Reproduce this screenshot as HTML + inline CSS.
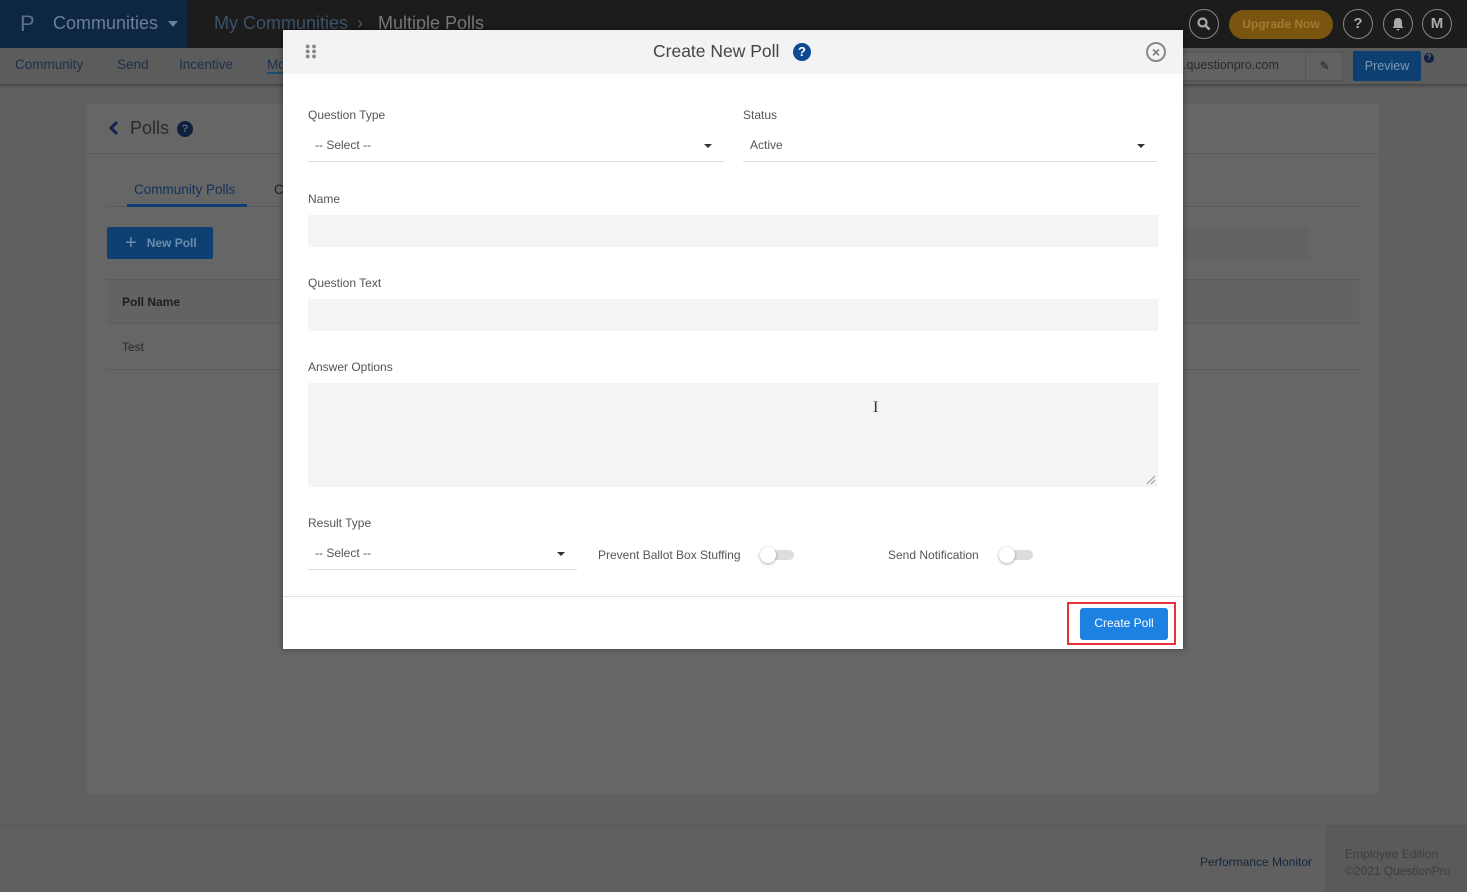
<!DOCTYPE html>
<html><head><meta charset="utf-8"><style>
*{box-sizing:border-box;margin:0;padding:0}
body{width:1467px;height:892px;overflow:hidden;background:#606060;font-family:"Liberation Sans",sans-serif;position:relative;color:#333}
.abs{position:absolute}
.top{left:0;top:0;width:1467px;height:48px;background:#1c1c1c}
.logo{left:0;top:0;width:187px;height:48px;background:#0d2743}
.nav{left:0;top:48px;width:1467px;height:36px;background:#5c5c5c;box-shadow:0 2px 3px rgba(0,0,0,.3)}
.card{left:87px;top:104px;width:1292px;height:690px;background:#666}
.foot{left:0;top:825px;width:1467px;height:67px;background:#606060;border-top:1px solid #575757}
.circ{width:30px;height:30px;border:1.5px solid #888;border-radius:50%;color:#aaa;font-weight:bold;font-size:15px;text-align:center;line-height:27px}
.modal{left:283px;top:30px;width:900px;height:619px;background:#fff;box-shadow:0 0 6px rgba(0,0,0,.4)}
.mh{left:0;top:0;width:900px;height:44px;background:#f3f3f3}
.lbl{font-size:12px;color:#555}
.sel{border-bottom:1px solid #ddd;font-size:12px;color:#555;padding-left:7px;height:32px;line-height:30px}
.car{position:absolute;right:12px;top:14px;border-left:4px solid transparent;border-right:4px solid transparent;border-top:4px solid #333}
.inp{background:#f4f4f4;height:32px}
.tog{width:32px;height:10px;border-radius:5px;background:#ddd}
.tog:before{content:"";position:absolute;left:-2px;top:-3px;width:16px;height:16px;border-radius:50%;background:#fff;box-shadow:0 1px 3px rgba(0,0,0,.35)}
</style></head><body>
<div class="abs top"></div>
<div class="abs logo"></div>
<div class="abs" style="left:20px;top:11px;font-size:22px;color:#5a6f88">P</div>
<div class="abs" style="left:53px;top:13px;font-size:18px;color:#6a7f98">Communities</div>
<div class="abs" style="left:168px;top:21px;border-left:5px solid transparent;border-right:5px solid transparent;border-top:6px solid #6a7f98"></div>
<div class="abs" style="left:214px;top:13px;font-size:18px;color:#3d5269">My Communities</div>
<div class="abs" style="left:357px;top:13px;font-size:18px;color:#555">›</div>
<div class="abs" style="left:378px;top:13px;font-size:18px;color:#777">Multiple Polls</div>
<div class="abs circ" style="left:1189px;top:9px"><svg width="16" height="16" viewBox="0 0 16 16" style="margin-top:6px"><circle cx="6.5" cy="6.5" r="4" fill="none" stroke="#aaa" stroke-width="2.2"/><path d="M9.5 9.5l4 4" stroke="#aaa" stroke-width="2.5"/></svg></div>
<div class="abs" style="left:1229px;top:10px;width:104px;height:29px;border-radius:15px;background:#7a5510;color:#a57a30;font-size:12px;font-weight:bold;text-align:center;line-height:29px">Upgrade Now</div>
<div class="abs circ" style="left:1343px;top:9px">?</div>
<div class="abs circ" style="left:1383px;top:9px"><svg width="14" height="14" viewBox="0 0 14 14" style="margin-top:7px"><path d="M7 1c-3 0-4 2-4 5v3l-1.5 2h11L11 9V6c0-3-1-5-4-5zM5.5 12h3a1.5 1.5 0 0 1-3 0z" fill="#aaa"/></svg></div>
<div class="abs circ" style="left:1422px;top:9px">M</div>
<div class="abs nav"></div>
<div class="abs" style="left:15px;top:57px;font-size:13.5px;color:#1d3048">Community</div>
<div class="abs" style="left:117px;top:57px;font-size:13.5px;color:#1d3048">Send</div>
<div class="abs" style="left:179px;top:57px;font-size:13.5px;color:#1d3048">Incentive</div>
<div class="abs" style="left:267px;top:57px;font-size:13.5px;color:#1d3048;border-bottom:2px solid #1d4d6e">Mo</div>
<div class="abs" style="left:1180px;top:52px;width:163px;height:29px;background:#626262;border:1px solid #555"></div>
<div class="abs" style="left:1183px;top:58px;font-size:12.5px;color:#2a2a2a">.questionpro.com</div>
<div class="abs" style="left:1305px;top:52px;width:38px;height:29px;border-left:1px solid #555;color:#222;text-align:center;line-height:29px;font-size:12px">&#9998;</div>
<div class="abs" style="left:1353px;top:51px;width:68px;height:30px;background:#0d3f70;border-radius:2px;color:#7d9ab5;font-size:12.5px;text-align:center;line-height:30px">Preview</div>
<div class="abs" style="left:1424px;top:53px;width:10px;height:10px;border-radius:50%;background:#0d2040;color:#777;font-size:8px;text-align:center;line-height:10px;font-weight:bold">?</div>
<div class="abs card"></div>
<div class="abs" style="left:87px;top:153px;width:1292px;height:1px;background:#5c5c5c"></div>
<svg class="abs" style="left:108px;top:120px" width="12" height="16" viewBox="0 0 12 16"><path d="M9 2L3 8l6 6" fill="none" stroke="#0d2a4a" stroke-width="3"/></svg>
<div class="abs" style="left:130px;top:118px;font-size:18px;color:#2a2a2a">Polls</div>
<div class="abs" style="left:177px;top:121px;width:16px;height:16px;border-radius:50%;background:#0d2040;color:#666;font-size:11px;font-weight:bold;text-align:center;line-height:16px">?</div>
<div class="abs" style="left:134px;top:182px;font-size:13.5px;color:#0f3257">Community Polls</div>
<div class="abs" style="left:274px;top:182px;font-size:13.5px;color:#222">C</div>
<div class="abs" style="left:107px;top:206px;width:1252px;height:1px;background:#5b5b5b"></div>
<div class="abs" style="left:127px;top:204px;width:120px;height:3px;background:#0d3f70"></div>
<div class="abs" style="left:107px;top:227px;width:106px;height:32px;background:#0d3f70;border-radius:2px;color:#6c8cab;font-size:12px;line-height:32px;padding-left:18px;font-weight:bold"><span style="font-size:20px;vertical-align:-2px;font-weight:normal">+</span>&nbsp;&nbsp; New Poll</div>
<div class="abs" style="left:107px;top:279px;width:1252px;height:45px;background:#636363;border-top:1px solid #5b5b5b;border-bottom:1px solid #5b5b5b"></div>
<div class="abs" style="left:122px;top:295px;font-size:12px;color:#1e1e1e;font-weight:bold">Poll Name</div>
<div class="abs" style="left:122px;top:340px;font-size:12px;color:#2a2a2a">Test</div>
<div class="abs" style="left:107px;top:369px;width:1252px;height:1px;background:#5b5b5b"></div>
<div class="abs" style="left:1180px;top:227px;width:129px;height:32px;background:#626262;border-radius:3px"></div>
<div class="abs foot"></div>
<div class="abs" style="left:1325px;top:826px;width:142px;height:66px;background:#5a5a5a"></div>
<div class="abs" style="left:1200px;top:855px;font-size:12px;color:#13263d">Performance Monitor</div>
<div class="abs" style="left:1345px;top:846px;font-size:12px;color:#3e3e3e;line-height:17px">Employee Edition<br>©2021 QuestionPro</div>

<div class="abs modal">
 <div class="abs mh"></div>
 <div class="abs" style="left:22px;top:14px;width:10px;line-height:5px;font-size:9px;color:#888;letter-spacing:1px">●●<br>●●<br>●●</div>
 <div class="abs" style="left:370px;top:11px;font-size:17.5px;color:#444">Create New Poll</div>
 <div class="abs" style="left:510px;top:13px;width:18px;height:18px;border-radius:50%;background:#0e4a91;color:#fff;font-size:13px;font-weight:bold;text-align:center;line-height:18px">?</div>
 <div class="abs" style="left:863px;top:12px;width:20px;height:20px;border-radius:50%;border:2px solid #888;color:#777;font-size:14px;text-align:center;line-height:16px;font-weight:bold">×</div>
 <div class="abs lbl" style="left:25px;top:78px">Question Type</div>
 <div class="abs lbl" style="left:460px;top:78px">Status</div>
 <div class="abs sel" style="left:25px;top:100px;width:416px">-- Select --<i class="car"></i></div>
 <div class="abs sel" style="left:460px;top:100px;width:414px">Active<i class="car"></i></div>
 <div class="abs lbl" style="left:25px;top:162px">Name</div>
 <div class="abs inp" style="left:25px;top:185px;width:850px"></div>
 <div class="abs lbl" style="left:25px;top:246px">Question Text</div>
 <div class="abs inp" style="left:25px;top:269px;width:850px"></div>
 <div class="abs lbl" style="left:25px;top:330px">Answer Options</div>
 <div class="abs inp" style="left:25px;top:353px;width:850px;height:104px"></div>
 <svg class="abs" style="left:863px;top:445px" width="10" height="10"><path d="M1 9L9 1M5 9L9 5" stroke="#999"/></svg>
 <div class="abs" style="left:590px;top:369px;font-size:16px;color:#333;font-family:'Liberation Serif',serif">I</div>
 <div class="abs lbl" style="left:25px;top:486px">Result Type</div>
 <div class="abs sel" style="left:25px;top:508px;width:269px">-- Select --<i class="car"></i></div>
 <div class="abs lbl" style="left:315px;top:518px">Prevent Ballot Box Stuffing</div>
 <div class="abs tog" style="left:479px;top:520px"></div>
 <div class="abs lbl" style="left:605px;top:518px">Send Notification</div>
 <div class="abs tog" style="left:718px;top:520px"></div>
 <div class="abs" style="left:0;top:566px;width:900px;height:1px;background:#e3e3e3"></div>
 <div class="abs" style="left:784px;top:572px;width:109px;height:43px;border:2px solid #e8323a"></div>
 <div class="abs" style="left:797px;top:578px;width:88px;height:32px;background:#1c81e0;border-radius:3px;color:#fff;font-size:12px;text-align:center;line-height:30px">Create Poll</div>
</div>
</body></html>
